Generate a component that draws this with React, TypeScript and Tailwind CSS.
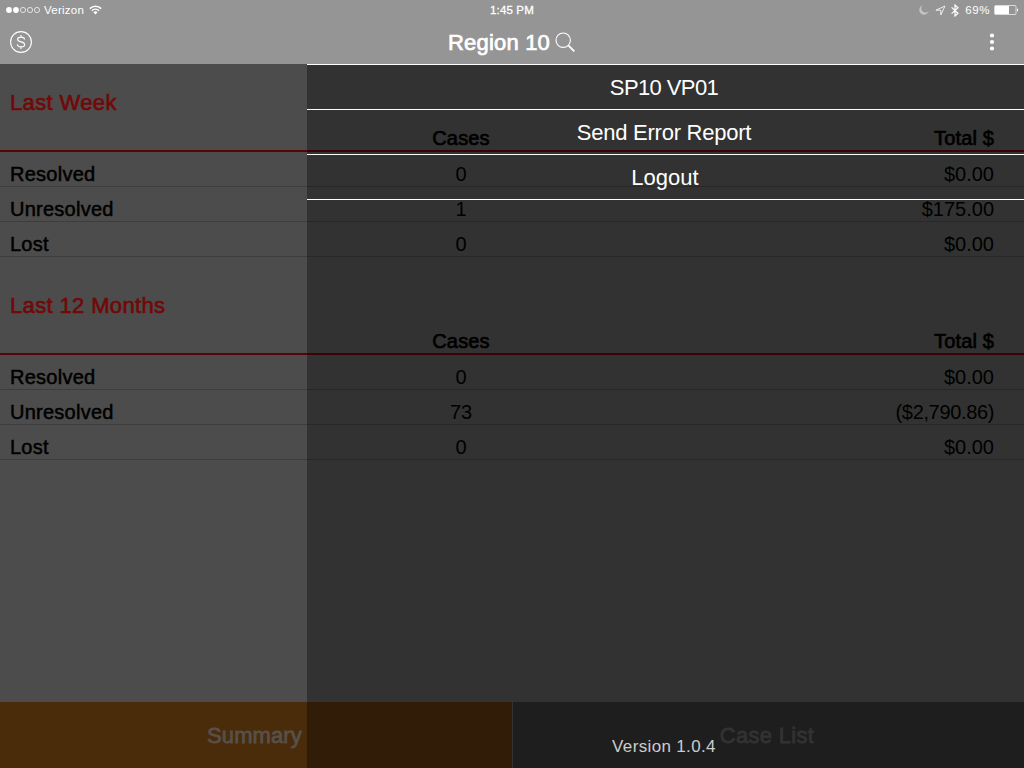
import React from "react";

type Row = { label: string; cases: string; total: string };

const lastWeek: Row[] = [
  { label: "Resolved", cases: "0", total: "$0.00" },
  { label: "Unresolved", cases: "1", total: "$175.00" },
  { label: "Lost", cases: "0", total: "$0.00" },
];

const lastYear: Row[] = [
  { label: "Resolved", cases: "0", total: "$0.00" },
  { label: "Unresolved", cases: "73", total: "($2,790.86)" },
  { label: "Lost", cases: "0", total: "$0.00" },
];

function StatusBar() {
  return (
    <div className="grid h-5 grid-cols-3 items-center text-[11.5px] leading-5">
      <div className="flex items-center pl-1.5">
        <svg width="35" height="8" viewBox="0 0 35 8" className="mr-[3px]">
          <circle cx="3" cy="4" r="2.9" fill="white" />
          <circle cx="10" cy="4" r="2.9" fill="white" />
          <circle cx="17" cy="4" r="2.6" fill="none" stroke="white" strokeWidth="0.7" />
          <circle cx="24" cy="4" r="2.6" fill="none" stroke="white" strokeWidth="0.7" />
          <circle cx="31" cy="4" r="2.6" fill="none" stroke="white" strokeWidth="0.7" />
        </svg>
        <span className="tracking-[0.25px]">Verizon</span>
        <svg width="13" height="10" viewBox="0 0 13 10" className="ml-[5px]" fill="none" stroke="white">
          <path d="M0.8 3.6a8.2 8.2 0 0 1 11.4 0" strokeWidth="1.6" />
          <path d="M2.9 5.8a5.2 5.2 0 0 1 7.2 0" strokeWidth="1.5" />
          <path d="M6.5 9.4L4.4 7.3a3 3 0 0 1 4.2 0z" fill="white" stroke="none" />
        </svg>
      </div>
      <div className="text-center tracking-[0.15px] [-webkit-text-stroke:0.3px_white]">1:45 PM</div>
      <div className="flex items-center justify-end pr-[5px]">
        <svg width="10" height="10" viewBox="0 0 10 10" className="mr-[6px]">
          <path d="M3.4 0.4A4.8 4.8 0 1 0 9.7 6.2A4 4 0 0 1 3.4 0.4z" fill="#c4c4c4" />
        </svg>
        <svg width="11" height="11" viewBox="0 0 11 11" className="mr-[5px]">
          <path d="M0.9 5.2L10 1L5.8 10V5.2z" fill="none" stroke="#eeeeee" strokeWidth="1" />
        </svg>
        <svg width="8" height="13" viewBox="0 0 8 13" className="mr-[6px]">
          <path d="M0.6 3.4L7 9.3L4 12V1L7 3.7L0.6 9.6" fill="none" stroke="white" strokeWidth="1.2" />
        </svg>
        <span className="mr-1 tracking-[0.6px]">69%</span>
        <svg width="25" height="10" viewBox="0 0 25 10">
          <rect x="0.5" y="0.5" width="21.5" height="9" rx="1" fill="none" stroke="#eeeeee" strokeWidth="0.8" />
          <rect x="1" y="1" width="14" height="8" fill="white" />
          <path d="M23 3.2a2 2 0 0 1 0 3.6z" fill="white" />
        </svg>
      </div>
    </div>
  );
}

function Header() {
  return (
    <header className="h-16 shrink-0 bg-[#959595] text-white">
      <StatusBar />
      <div className="flex h-11 items-center justify-between pl-[9px] pr-[29px]">
        <svg width="24" height="24" viewBox="0 0 24 24" fill="none" stroke="white">
          <circle cx="12" cy="12" r="10.4" strokeWidth="1.1" />
          <path
            d="M15.5 9.4c0-1.5-1.5-2.3-3.5-2.3s-3.4 0.8-3.4 2.3c0 1.6 1.5 2 3.5 2.5s3.6 1 3.6 2.6-1.6 2.4-3.6 2.4-3.7-0.9-3.7-2.6M12 5v2.4M12 16.6v2.4"
            strokeWidth="1.1"
          />
        </svg>
        <div className="flex items-center pl-[2px]">
          <h1 className="pt-px text-[22px] leading-[43px] tracking-[0.2px] [-webkit-text-stroke:0.7px_white]">Region 10</h1>
          <svg width="21" height="21" viewBox="0 0 21 21" className="ml-[5px]" fill="none" stroke="white">
            <circle cx="8.2" cy="8.2" r="7.2" strokeWidth="1.1" />
            <path d="M13.3 13.3l6 6" strokeWidth="1.8" />
          </svg>
        </div>
        <svg width="6" height="18" viewBox="0 0 6 18" fill="white">
          <circle cx="3" cy="2.5" r="2.1" />
          <circle cx="3" cy="9" r="2.1" />
          <circle cx="3" cy="15.5" r="2.1" />
        </svg>
      </div>
    </header>
  );
}

function Section({ title, rows }: { title: string; rows: Row[] }) {
  return (
    <section className="h-[203px] text-[20px] text-black">
      <div className="h-[88px] border-b-2 border-[#580406]">
        <h2 className="h-[63px] pl-2.5 pt-[25px] text-[22px] leading-[28px] tracking-[0.36px] text-[#720808] [-webkit-text-stroke:0.6px_#720808]">
          {title}
        </h2>
        <div className="grid h-[22px] grid-cols-[410px_102px_1fr] leading-[22px] tracking-[0.15px] [-webkit-text-stroke:0.7px_black]">
          <span />
          <span className="text-center">Cases</span>
          <span className="pr-[30px] text-right">Total $</span>
        </div>
      </div>
      {rows.map((row) => (
        <div key={row.label} className="grid h-[35px] grid-cols-[410px_102px_1fr] border-b border-[#3d3d3d] pt-[7px] leading-[30px]">
          <span className="pl-2.5 tracking-[0.25px] [-webkit-text-stroke:0.5px_black]">{row.label}</span>
          <span className="text-center">{row.cases}</span>
          <span className={row.total.startsWith("(") ? "pr-[30px] text-right tracking-[-0.35px]" : "pr-[30px] text-right"}>
            {row.total}
          </span>
        </div>
      ))}
    </section>
  );
}

function Menu() {
  return (
    <aside className="absolute bottom-0 right-0 top-16 flex w-[717px] flex-col justify-between bg-black/[0.333] text-center text-white">
      <ul className="border-t border-white text-[22px] leading-[44px]">
        <li className="h-[45px] border-b border-white pr-[3px] pt-px tracking-[-0.6px]">SP10 VP01</li>
        <li className="h-[45px] border-b border-white pr-[3px] pt-px tracking-[-0.25px]">Send Error Report</li>
        <li className="h-[45px] border-b border-white pr-px pt-px">Logout</li>
      </ul>
      <p className="h-8 pr-[3px] text-[17px] leading-[22px] tracking-[0.35px] text-[#cccccc]">Version 1.0.4</p>
    </aside>
  );
}

export default function App() {
  return (
    <div className="relative flex h-[768px] w-[1024px] flex-col overflow-hidden bg-[#4c4c4c] font-['Liberation_Sans',Arial,sans-serif]">
      <Header />
      <main className="flex-1">
        <Section title="Last Week" rows={lastWeek} />
        <Section title="Last 12 Months" rows={lastYear} />
      </main>
      <nav className="flex h-[66px] shrink-0 text-center text-[22px] leading-[68px]">
        <div className="w-[512px] bg-[#4a2c0b] pr-[3px] tracking-[0.1px] text-[#57504a] [-webkit-text-stroke:0.8px_#57504a]">Summary</div>
        <div className="w-[512px] border-l border-[#4c4c4c] bg-[#2d2d2d] pr-[3px] tracking-[0.3px] text-[#4c4c4c] [-webkit-text-stroke:0.8px_#4c4c4c]">
          Case List
        </div>
      </nav>
      <Menu />
    </div>
  );
}
